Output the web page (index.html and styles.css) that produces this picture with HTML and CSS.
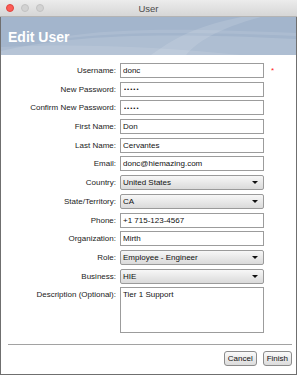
FILE: index.html
```html
<!DOCTYPE html>
<html lang="en">
<head>
    <meta charset="UTF-8">
    <meta name="viewport" content="width=device-width, initial-scale=1.0">
    <title>User</title>
    <link rel="stylesheet" href="styles.css">
</head>
<body>
<div class="window">
    <div class="titlebar">
        <div class="lights">
            <span class="light close"></span>
            <span class="light"></span>
            <span class="light"></span>
        </div>
        <div class="title">User</div>
    </div>

    <div class="banner">
        <svg class="waves" width="297" height="38" viewBox="0 0 297 38">
            <path d="M0 34 C60 20 140 14 297 22 L297 38 L0 38 Z" fill="#ffffff" opacity="0.12"/>
            <path d="M0 30 C80 26 160 30 240 38 L0 38 Z" fill="#ffffff" opacity="0.10"/>
            <path d="M150 38 C170 24 190 10 240 0 L260 0 C215 12 195 26 185 38 Z" fill="#ffffff" opacity="0.12"/>
            <path d="M60 20 C120 10 200 12 297 16 L297 19 C200 15 120 14 60 22 Z" fill="#ffffff" opacity="0.10"/>
        </svg>
        <h1>Edit User</h1>
    </div>

    <form class="user-form">
        <label for="username">Username:</label>
        <input type="text" id="username" value="donc">
        <span class="required">*</span>

        <label for="password">New Password:</label>
        <input type="password" id="password" value="abcde">
        <span></span>

        <label for="confirm">Confirm New Password:</label>
        <input type="password" id="confirm" value="abcde">
        <span></span>

        <label for="first">First Name:</label>
        <input type="text" id="first" value="Don">
        <span></span>

        <label for="last">Last Name:</label>
        <input type="text" id="last" value="Cervantes">
        <span></span>

        <label for="email">Email:</label>
        <input type="text" id="email" value="donc@hiemazing.com">
        <span></span>

        <label for="country">Country:</label>
        <div class="combo"><select id="country"><option>United States</option></select></div>
        <span></span>

        <label for="state">State/Territory:</label>
        <div class="combo"><select id="state"><option>CA</option></select></div>
        <span></span>

        <label for="phone">Phone:</label>
        <input type="text" id="phone" value="+1 715-123-4567">
        <span></span>

        <label for="org">Organization:</label>
        <input type="text" id="org" value="Mirth">
        <span></span>

        <label for="role">Role:</label>
        <div class="combo"><select id="role"><option>Employee - Engineer</option></select></div>
        <span></span>

        <label for="business">Business:</label>
        <div class="combo"><select id="business"><option>HIE</option></select></div>
        <span></span>

        <label for="desc" class="top">Description (Optional):</label>
        <textarea id="desc">Tier 1 Support</textarea>
        <span></span>
    </form>

    <div class="footer">
        <button type="button">Cancel</button>
        <button type="button">Finish</button>
    </div>
</div>
</body>
</html>
```

FILE: styles.css
```css
body {
    margin: 0;
    background-color: #fff;
    font-family: "Liberation Sans", Arial, sans-serif;
}

.window {
    width: 297px;
    height: 375px;
    box-sizing: border-box;
    border: 1px solid #6f6f6f;
    border-top: none;
    background-color: #fff;
    display: flex;
    flex-direction: column;
}

.titlebar {
    height: 17px;
    box-sizing: border-box;
    display: flex;
    align-items: center;
    justify-content: center;
    position: relative;
    background: linear-gradient(#ececec, #d6d6d6);
    border-bottom: 1px solid #b4b4b4;
    margin: 0 -1px;
}

.lights {
    position: absolute;
    left: 6px;
    top: 4px;
    display: flex;
    gap: 7px;
}

.light {
    width: 8px;
    height: 8px;
    border-radius: 50%;
    box-sizing: border-box;
    background-color: #d2d2d2;
    border: 1px solid #c2c2c2;
}

.light.close {
    background-color: #fc5d57;
    border-color: #e0443e;
}

.title {
    font-size: 9.5px;
    color: #4b4b4b;
}

.banner {
    height: 38px;
    position: relative;
    background-color: #a3b5cc;
    overflow: hidden;
}

.waves {
    position: absolute;
    left: 0;
    top: 0;
}

.banner h1 {
    position: relative;
    margin: 0;
    padding: 13px 0 0 7px;
    font-size: 14px;
    line-height: 14px;
    color: #fff;
}

.user-form {
    display: grid;
    grid-template-columns: 115px 144px 1fr;
    grid-template-rows: repeat(12, 15px) 46px;
    column-gap: 4px;
    row-gap: 3.7px;
    padding-top: 8px;
    font-size: 8px;
}

.user-form label {
    text-align: right;
    align-self: center;
    color: #222;
}

.user-form label.top {
    align-self: start;
    padding-top: 3px;
}

.user-form input,
.user-form textarea {
    margin: 0;
    padding: 0 2px;
    box-sizing: border-box;
    width: 144px;
    height: 15px;
    border: 1px solid #9c9c9c;
    font-family: inherit;
    font-size: 8px;
    color: #111;
    background-color: #fff;
    outline: none;
}

.user-form input[type="password"] {
    font-size: 6px;
    letter-spacing: 1px;
    padding-left: 3px;
}

.user-form textarea {
    height: 46px;
    padding-top: 2px;
    resize: none;
}

.required {
    color: #ff2020;
    font-size: 8px;
    align-self: center;
    padding-left: 3px;
    line-height: 8px;
}

.combo {
    position: relative;
    width: 144px;
    height: 15px;
}

.combo select {
    appearance: none;
    width: 100%;
    height: 100%;
    margin: 0;
    padding: 0 2px;
    box-sizing: border-box;
    border: 1px solid #9a9a9a;
    border-radius: 2px;
    background: linear-gradient(#f7f7f7, #dadada);
    font-family: inherit;
    font-size: 8px;
    color: #111;
}

.combo::after {
    content: "";
    position: absolute;
    right: 6px;
    top: 6px;
    border-left: 3px solid transparent;
    border-right: 3px solid transparent;
    border-top: 3px solid #111;
}

.footer {
    margin: 11px 4px 0 7px;
    padding-top: 6px;
    border-top: 1px solid #a2a2a2;
    display: flex;
    justify-content: flex-end;
    gap: 6px;
}

.footer button {
    height: 15px;
    padding: 0 3px;
    border: 1px solid #8c8c8c;
    border-radius: 3px;
    background: linear-gradient(#fafafa, #dcdcdc);
    font-family: inherit;
    font-size: 8px;
    color: #111;
}
```
